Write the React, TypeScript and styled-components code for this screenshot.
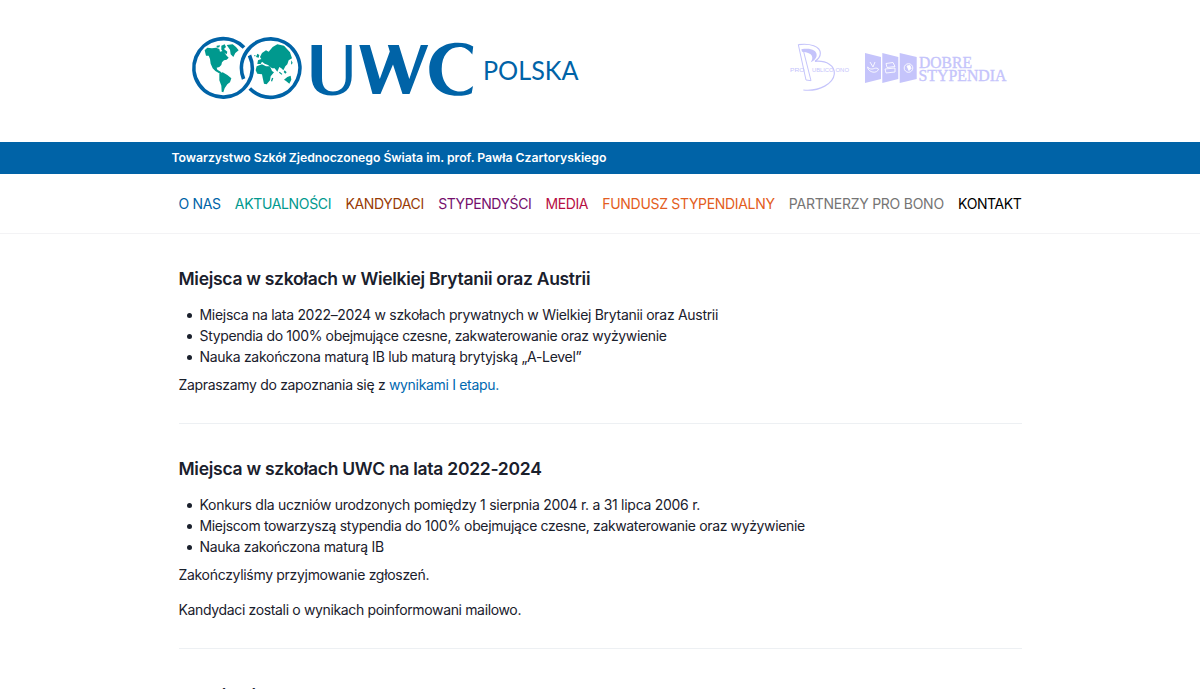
import React from 'react';
import styled, { createGlobalStyle } from 'styled-components';

const GlobalStyle = createGlobalStyle`
  *, *::before, *::after { box-sizing: border-box; }
  html, body { margin: 0; height: 689px; overflow: hidden; background: #fff; }
  body { font-family: Inter, "Liberation Sans", sans-serif; font-size: 14px; line-height: 21px; color: #1a202c; }
`;

const Page = styled.div`
  height: 689px;
  overflow: hidden;
`;

const Header = styled.header`
  height: 142px;
  padding: 31px 191px 0 189px;
  display: flex;
  align-items: flex-start;
  justify-content: space-between;
`;

const Partners = styled.div`
  display: flex;
  align-items: center;
  gap: 11px;
  margin-top: 7px;
`;

const Banner = styled.div`
  height: 32px;
  padding-left: 171.5px;
  background: #0063a7;
  color: #fff;
  font-size: 12.25px;
  font-weight: 600;
  line-height: 32px;
  letter-spacing: -0.035px;
`;

const Nav = styled.nav`
  display: flex;
  height: 60px;
  padding: 19px 178.5px 0;
  justify-content: space-between;
  border-bottom: 1px solid #f3f3f5;
`;

const NavLink = styled.a<{ $color: string; $spacing: number }>`
  color: ${p => p.$color};
  white-space: nowrap;
  letter-spacing: ${p => p.$spacing}px;
`;

const Main = styled.main`
  padding: 0 178.5px;
`;

const Section = styled.section<{ $top?: number }>`
  padding: ${p => p.$top ?? 32}px 0 28px;
  border-bottom: 1px solid #edf0f3;
`;

const Title = styled.h2<{ $spacing?: number }>`
  margin: 0 0 12px;
  font-size: 17.5px;
  line-height: 26px;
  font-weight: 600;
  white-space: nowrap;
  letter-spacing: ${p => p.$spacing ?? -0.29}px;
`;

const List = styled.ul`
  margin: 0 0 7px;
  padding: 0 0 0 8px;
  list-style: none;
`;

const Item = styled.li<{ $spacing: number }>`
  display: flex;
  align-items: center;
  letter-spacing: ${p => p.$spacing}px;

  &::before {
    content: '';
    width: 5px;
    height: 5px;
    margin: 1px 8px 0 0;
    border-radius: 50%;
    background: #1a202c;
  }
`;

const Paragraph = styled.p<{ $gap?: number; $spacing: number }>`
  margin: ${p => p.$gap ?? 0}px 0 0;
  letter-spacing: ${p => p.$spacing}px;
`;

const Link = styled.a`
  color: #0068b0;
`;

const BLUE = '#0063a7';
const GREEN = '#00998e';
const LILAC = '#c5c4fb';

const Logo = () => (
  <svg width="395" height="76" viewBox="189 31 395 76">
    <g fill={GREEN} transform="translate(180 25) scale(.33333)">
      <path d="M74 76L82 68 96 70 108 68 118 72 120 80 128 78 134 84 140 92 146 98 140 104 132 106 126 112 124 120 118 126 110 128 112 134 122 140 128 148 120 146 106 138 98 130 92 116 90 102 86 92 78 92z" />
      <path d="M140 60L158 58 168 66 176 76 166 84 160 96 152 88 150 74z" />
      <path d="M124 62l10-4 4 8-6 6 10 8-2 8-10-6-6-8zM110 62l10-1-2 6-8 1z" />
      <path d="M118 146L128 142 142 150 154 160 150 172 142 178 134 190 130 202 125 200 124 182 118 166z" />
      <path d="M230 124L246 118 258 124 270 124 276 138 282 142 272 154 270 166 260 178 252 176 248 158 246 148 232 146 227 136z" />
      <path d="M232 117L234 106 244 102 240 96 246 84 258 76 266 80 278 66 292 58 312 62 330 82 336 100 326 106 322 118 316 124 310 136 304 130 298 126 292 140 284 130 276 130 264 120 254 116 246 110 242 117z" />
      <path d="M232 86l6 4-2 8-8-2zM222 90l5 1-2 4zM312 164L322 156 332 152 334 164 328 176 318 168zM299 140l8 7-2 2-8-6zM314 136l6 6-4 4-5-5zM334 106l4 8-5 5zM276 158l4 2-4 10-3-3z" />
    </g>
    <g fill="none" stroke={BLUE} strokeWidth="3.7">
      <path d="M249.500 55.400A29.200 29.200 0 1 1 244 47.500" />
      <path d="M249.800 88.500A29.200 29.200 0 1 0 243.600 79" />
    </g>
    <g fill={BLUE}>
      <path d="M311.500 45H322v33c0 9 4 13.500 11 13.500s12.700-4.500 12.700-13.500V45h6v31c0 13-7.700 19.500-20 19.500S311.500 89 311.500 76z" />
      <path d="M359.300 45H369.800l10 34 10-27.500-2-6.500h11l10.500 34 11.500-34h7.400L409.500 94H402.500L393 64.500 380.500 94h-8z" />
      <path d="M473.200 46.500L472.300 54.500C468.500 49.500 464.500 47 459.500 47c-11 0-17.800 9-17.800 22s7.300 22.500 18.300 22.500c5 0 9-2 13-5.500l-1.300 7.200c-4 1.800-8.500 2.600-14 2.600-17.500 0-28.400-10.300-28.400-26.300 0-16.500 11.500-26.800 28.700-26.800 6 0 10.500 1 15.200 3.800z" />
    </g>
    <text x="483" y="79.700" fill={BLUE} fontFamily="Lato, sans-serif" fontSize="26.500" textLength="95.500" lengthAdjust="spacingAndGlyphs">POLSKA</text>
  </svg>
);

const ProPublicoBono = () => (
  <svg width="66" height="60" viewBox="786 38 66 60">
    <g transform="translate(780 35) scale(.33333)" fill="none" stroke={LILAC}>
      <path d="M55 29C90 24 121 34 121 55C121 66 113 74 105 79C140 76 165 92 163 117C160 145 120 170 70 165" strokeWidth="3.500" />
      <path d="M55 29L78 135L93 137L70 46" strokeWidth="3" />
      <path d="M64 43C92 38 110 46 110 60C110 70 102 77 92 82C101 70 101 52 66 50z" fill={LILAC} stroke="none" />
    </g>
    <g fill={LILAC} fontFamily="Liberation Sans, sans-serif" fontSize="5.600">
      <text x="790" y="72.300" textLength="14.500" lengthAdjust="spacingAndGlyphs">PRO</text>
      <text x="812" y="72.300" textLength="21.500" lengthAdjust="spacingAndGlyphs">UBLICO</text>
      <text x="835.500" y="72.300" textLength="13.500" lengthAdjust="spacingAndGlyphs">ONO</text>
    </g>
  </svg>
);

const DobreStypendia = () => (
  <svg width="146" height="40" viewBox="863 48 146 40">
    <path d="M865 53l16 4v22l-16 4zM882.300 53l16 4v22l-16 4zM899.700 53l17 4v22l-17 4z" fill={LILAC} />
    <g fill="none" stroke="#fff" strokeWidth="1" strokeOpacity=".85">
      <path d="M870 62l3 5 2-5M867.500 67c1 6 10 7 11 2-4-3-6 3-11-2z" />
      <path d="M886 63.500l7-1 2 4-8 1zM885 69l10-1v4l-9 1z" />
      <circle cx="908.500" cy="68" r="4.300" />
      <path d="M907 66l3-.5 1 3-2 2z" fill="#fff" />
    </g>
    <g fill={LILAC} stroke={LILAC} strokeWidth=".35" fontFamily="Liberation Serif, serif" fontSize="15.800">
      <text x="919" y="67.600" textLength="53" lengthAdjust="spacingAndGlyphs">DOBRE</text>
      <text x="918.500" y="80.800" textLength="88" lengthAdjust="spacingAndGlyphs">STYPENDIA</text>
    </g>
  </svg>
);

export default function App() {
  return (
    <Page>
      <GlobalStyle />
      <Header>
        <Logo />
        <Partners><ProPublicoBono /><DobreStypendia /></Partners>
      </Header>
      <Banner>Towarzystwo Szkół Zjednoczonego Świata im. prof. Pawła Czartoryskiego</Banner>
      <Nav>
        <NavLink $color="#0063a7" $spacing={-0.35}>O NAS</NavLink>
        <NavLink $color="#00998e" $spacing={-0.34}>AKTUALNOŚCI</NavLink>
        <NavLink $color="#983b05" $spacing={-0.33}>KANDYDACI</NavLink>
        <NavLink $color="#750f6d" $spacing={-0.43}>STYPENDYŚCI</NavLink>
        <NavLink $color="#b70f43" $spacing={-0.4}>MEDIA</NavLink>
        <NavLink $color="#e35d21" $spacing={-0.32}>FUNDUSZ STYPENDIALNY</NavLink>
        <NavLink $color="#757575" $spacing={-0.25}>PARTNERZY PRO BONO</NavLink>
        <NavLink $color="#000" $spacing={-0.4}>KONTAKT</NavLink>
      </Nav>
      <Main>
        <Section>
          <Title>Miejsca w szkołach w Wielkiej Brytanii oraz Austrii</Title>
          <List>
            <Item $spacing={-0.3}>Miejsca na lata 2022–2024 w szkołach prywatnych w Wielkiej Brytanii oraz Austrii</Item>
            <Item $spacing={-0.35}>Stypendia do 100% obejmujące czesne, zakwaterowanie oraz wyżywienie</Item>
            <Item $spacing={-0.29}>Nauka zakończona maturą IB lub maturą brytyjską „A-Level”</Item>
          </List>
          <Paragraph $spacing={-0.32}>Zapraszamy do zapoznania się z <Link>wynikami I etapu.</Link></Paragraph>
        </Section>
        <Section>
          <Title $spacing={-0.27}>Miejsca w szkołach UWC na lata 2022-2024</Title>
          <List>
            <Item $spacing={-0.28}>Konkurs dla uczniów urodzonych pomiędzy 1 sierpnia 2004 r. a 31 lipca 2006 r.</Item>
            <Item $spacing={-0.355}>Miejscom towarzyszą stypendia do 100% obejmujące czesne, zakwaterowanie oraz wyżywienie</Item>
            <Item $spacing={-0.32}>Nauka zakończona maturą IB</Item>
          </List>
          <Paragraph $spacing={-0.31}>Zakończyliśmy przyjmowanie zgłoszeń.</Paragraph>
          <Paragraph $gap={14} $spacing={-0.35}>Kandydaci zostali o wynikach poinformowani mailowo.</Paragraph>
        </Section>
        <Section $top={34}>
          <Title $spacing={0}>Uczniowie UWC</Title>
        </Section>
      </Main>
    </Page>
  );
}
